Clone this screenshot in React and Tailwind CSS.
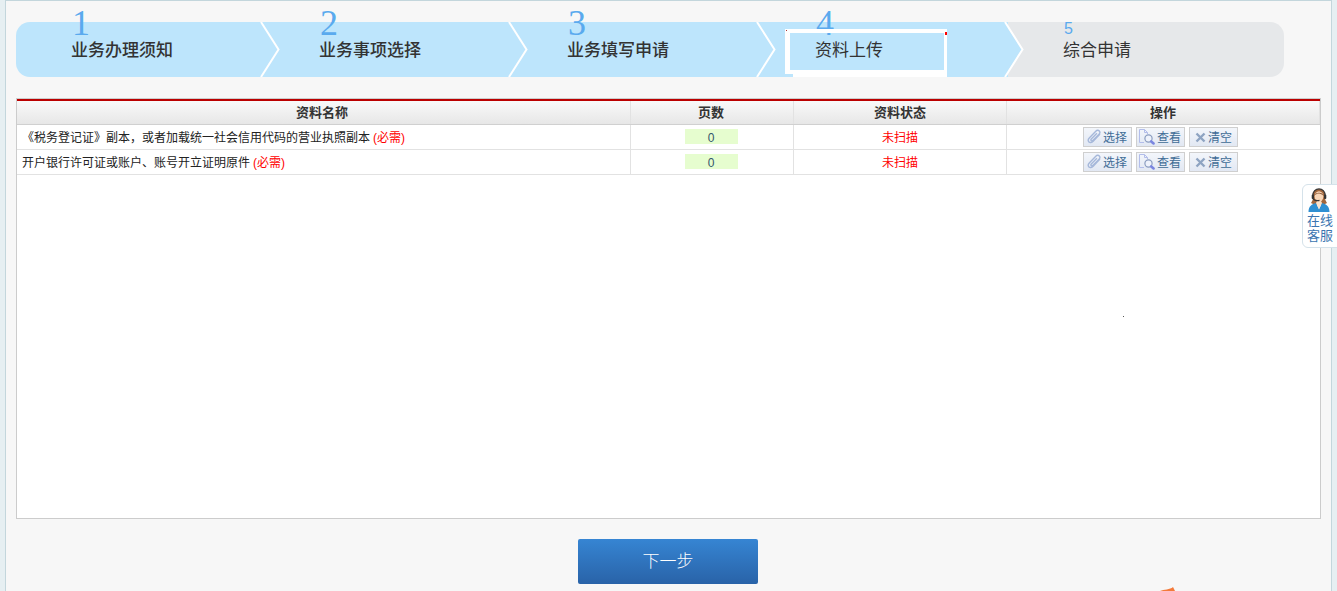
import React from "react";

const F = '"Liberation Sans","Noto Sans CJK SC",sans-serif';

function Chevron() {
  return (
    <svg width="20" height="55" viewBox="0 0 20 55" className="absolute right-[-16px] top-0 z-10">
      <path d="M0 0 L18 27.5 L0 55 Z" fill="#bde5fc" />
      <path d="M1 0 L18.5 27.5 L1 55" fill="none" stroke="#fff" strokeWidth="2" />
    </svg>
  );
}

function Step({ n, label, small, active, last, first, grey }) {
  return (
    <div className={`relative h-[55px] ${last ? "w-[276px] rounded-r-[14px]" : "w-[248px]"} ${first ? "rounded-l-[14px]" : ""} ${grey ? "bg-[#e6e8ea]" : "bg-[#bde5fc]"}`}>
      <span className={`absolute z-20 leading-none text-[#5aaaee] ${small ? "left-[56px] top-[-1px] font-['Liberation_Sans',sans-serif] text-[16px]" : "left-[56px] top-[-17px] font-['Liberation_Serif',serif] text-[36px]"}`}>{n}</span>
      {active && (
        <>
          <div className="absolute left-[25px] top-[7px] z-30 h-[48px] w-[162px] border-[5px] border-t-[4px] border-r-[3px] border-b-[7px] border-white" />
          <div className="absolute left-[25px] top-[52px] z-30 h-[3px] w-[8px] bg-[#bde5fc]" />
          <div className="absolute left-[185px] top-[10px] z-30 h-[3px] w-[2px] bg-[#f00]" />
          <div className="absolute left-[26px] top-[8px] z-30 h-[1px] w-[1px] bg-[#a33]" />
        </>
      )}
      <span className={`absolute left-[55px] top-[19px] z-40 text-[17px] leading-[20px] text-[#333] ${active || last ? "" : "font-medium"}`}>{label}</span>
      {!last && <Chevron />}
    </div>
  );
}

function Clip() {
  return (
    <svg width="15" height="16" viewBox="0 0 15 16" fill="none" stroke="#a6b8da" strokeWidth="1.4">
      <path d="M13 5 L6.2 12.2 C4.8 13.7 2.9 13.9 1.9 12.9 C0.9 11.9 1.1 10.2 2.5 8.7 L8.8 2.2 C9.9 1.1 11.4 1 12.3 1.9 C13.2 2.8 13 4.1 12 5.2 L6 11.3 C5.4 11.9 4.6 12 4.2 11.6 C3.8 11.2 3.9 10.4 4.5 9.8 L9.9 4.3" />
    </svg>
  );
}

function Doc() {
  return (
    <svg width="19" height="18" viewBox="0 0 19 18" fill="none">
      <path d="M1.5 1.5 H6.5 L9.5 4.5 V6 M1.5 1.5 V14.5 H6" stroke="#b2bdea" strokeWidth="1" />
      <path d="M6.5 1.5 V4.5 H9.5" stroke="#b2bdea" strokeWidth="1" />
      <circle cx="10.5" cy="10.5" r="3.6" fill="#eef2fb" stroke="#8b9dc0" strokeWidth="1.2" />
      <path d="M13.2 13.4 L15.6 15.4" stroke="#7b86e0" strokeWidth="2.6" strokeLinecap="round" />
    </svg>
  );
}

function X() {
  return (
    <svg width="11" height="11" viewBox="0 0 11 11" fill="none" stroke="#8ea4c2" strokeWidth="2.4">
      <path d="M1.5 1.5 L9.5 9.5 M9.5 1.5 L1.5 9.5" />
    </svg>
  );
}

function Btn({ icon, label, pl = "pl-[4px]", gap = "gap-[1px]" }) {
  return (
    <div className={`flex h-[20px] w-[49px] items-center border border-[#cfcfcf] bg-gradient-to-b from-[#f3f6fb] to-[#e2e8f3] text-[12px] text-[#3f6c96] ${pl} ${gap}`}>
      {icon}
      <span className="pt-[2px] leading-none">{label}</span>
    </div>
  );
}

function Row({ children }) {
  return (
    <div className="flex h-[25px] border-b border-[#e2e2e2] text-[12px]">
      <div className="flex w-[614px] items-center border-r border-[#e2e2e2] pl-[5px] pt-[2px] text-[#222]">
        <span>{children}</span>
        <span className="ml-[3px] text-[#f00]">(必需)</span>
      </div>
      <div className="flex w-[163px] items-center justify-center border-r border-[#e2e2e2] pr-[2px]">
        <div className="mb-[2px] h-[15px] w-[53px] bg-[#e6fdcf] pt-[1px] text-center text-[12px] leading-[16px] text-[#33556b]">0</div>
      </div>
      <div className="flex w-[213px] items-center justify-center border-r border-[#e2e2e2] pt-[2px] text-[#f00]">未扫描</div>
      <div className="flex flex-1 items-center gap-[4px] pl-[76px]">
        <Btn icon={<Clip />} label="选择" pl="pl-[3px]" gap="gap-[1px]" />
        <Btn icon={<Doc />} label="查看" pl="pl-[1px]" gap="gap-0" />
        <Btn icon={<X />} label="清空" pl="pl-[5px]" gap="gap-[2px]" />
      </div>
    </div>
  );
}

function Agent() {
  return (
    <svg width="22" height="24" viewBox="0 0 22 24">
      <path d="M5 10 C4 3 7 1 11 1 C15 1 18 3 17 10 C17 12 18 13 19 15 L15 17 H7 L3 15 C4 13 5 12 5 10 Z" fill="#a1663c" />
      <path d="M0.5 24 C0.5 18 4 16 8 15 L11 21 L14 15 C18 16 21.5 18 21.5 24 Z" fill="#2e8fd2" />
      <path d="M8 15 L11 21.5 L14 15 L12.5 12 H9.5 Z" fill="#fbe3cd" />
      <ellipse cx="11" cy="8.5" rx="4.4" ry="5.2" fill="#f8d6b8" />
      <path d="M6.4 8 C6.8 3.5 15.2 3.5 15.6 8 C13.5 5.6 11 5.4 9.5 5.6 C8.5 6 7.2 6.8 6.4 8 Z" fill="#7f4e2d" />
      <path d="M4.8 8 C4.6 -1.5 17.4 -1.5 17.2 8" fill="none" stroke="#3a3a3a" strokeWidth="1.3" />
      <rect x="3.7" y="6.5" width="2.3" height="4.4" rx="1" fill="#333" />
      <rect x="16" y="6.5" width="2.3" height="4.4" rx="1" fill="#333" />
      <path d="M5 10.5 C6 13 9 12.8 11.5 12.4" fill="none" stroke="#333" strokeWidth="1.1" />
    </svg>
  );
}

export default function App() {
  return (
    <div className="relative h-[591px] w-[1337px] overflow-hidden bg-[#e6eff2] px-[5px]" style={{ fontFamily: F }}>
      <div className="h-[591px] border-x border-t border-[#c3d6dc] bg-[#f7f7f7] px-[10px] pt-[21px]">
        <div className="flex w-[1268px]">
          <Step n="1" label="业务办理须知" first />
          <Step n="2" label="业务事项选择" />
          <Step n="3" label="业务填写申请" />
          <Step n="4" label="资料上传" active />
          <Step n="5" label="综合申请" small last grey />
        </div>

        <div className="mt-[21px] h-[421px] w-[1305px] border border-[#cccccc] bg-white">
          <div className="h-[2px] bg-[#bb0000]" />
          <div className="flex h-[24px] border-b border-[#d0d0d0] bg-gradient-to-b from-[#f9f9f9] to-[#e7e7e7] text-center text-[13px] leading-[23px] font-bold text-[#333]">
            <div className="w-[614px] border-r border-[#e2e2e2] pr-[3px]">资料名称</div>
            <div className="w-[163px] border-r border-[#e2e2e2] pr-[2px]">页数</div>
            <div className="w-[213px] border-r border-[#e2e2e2]">资料状态</div>
            <div className="flex-1 border-r border-[#e2e2e2]">操作</div>
          </div>
          <Row>《税务登记证》副本，或者加载统一社会信用代码的营业执照副本</Row>
          <Row>开户银行许可证或账户、账号开立证明原件</Row>
        </div>

        <div className="mt-[20px] ml-[562px] flex h-[45px] w-[180px] items-center justify-center rounded-[2px] bg-gradient-to-b from-[#3685d3] to-[#2963a8] text-[17px] font-light text-white">下一步</div>
      </div>

      <div className="absolute left-[1302px] top-[184px] flex h-[64px] w-[40px] flex-col items-start rounded-l-[6px] border border-[#d5e2ea] bg-white pl-[4px] pt-[3px] text-[13px] leading-[15px] text-[#3b75b0]">
        <div className="h-[25px] pl-[1px]"><Agent /></div>
        <div>在线</div>
        <div>客服</div>
      </div>
      <div className="absolute left-[1123px] top-[316px] h-px w-px bg-[#555]" />
      <svg width="16" height="4" viewBox="0 0 16 4" className="absolute left-[1160px] top-[587px]">
        <path d="M0 4 C4 2 10 3 13 0 L15 4 Z" fill="#f47a3a" />
      </svg>
    </div>
  );
}
